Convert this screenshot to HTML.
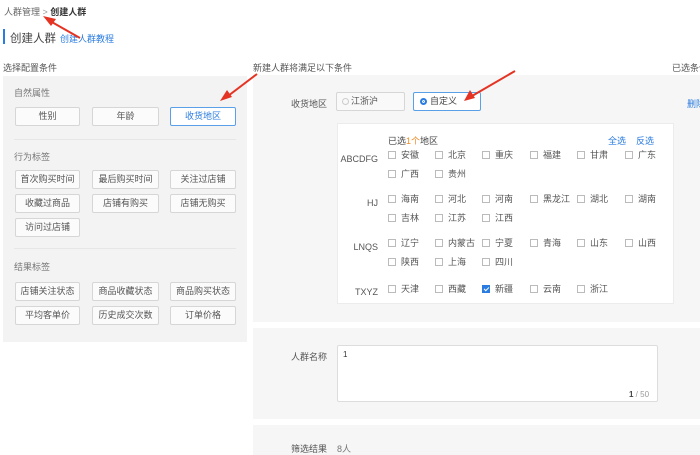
<!DOCTYPE html>
<html><head><meta charset="utf-8"><style>
*{box-sizing:border-box;margin:0;padding:0}
body{width:700px;height:455px;overflow:hidden;background:#fff;font-family:"Liberation Sans","Noto Sans CJK SC",sans-serif;font-size:9px;color:#333;position:relative}
.a{position:absolute;white-space:nowrap}
.btn{position:absolute;height:19px;border:1px solid #d6d6d6;background:#fbfbfb;text-align:center;line-height:17px;color:#555;font-size:9px;border-radius:2px}
.cb{position:absolute;font-size:9px;color:#555;line-height:10px}
.cb i{display:inline-block;width:8px;height:8px;border:1px solid #bbb;background:#fff;vertical-align:-1px;margin-right:5px;position:relative}
.cb i.on{background:#2b7ce0;border-color:#2b7ce0}
.cb i.on:after{content:"";position:absolute;left:2px;top:0px;width:2px;height:4px;border:solid #fff;border-width:0 1px 1px 0;transform:rotate(45deg)}
.lab{position:absolute;font-size:9px;color:#555;text-align:right;width:40px}
</style></head><body>
<div class="a" style="left:4px;top:5px;font-size:9px;color:#666">人群管理 <span style="color:#999">&gt;</span> <b style="color:#333">创建人群</b></div>
<div class="a" style="left:3px;top:29px;width:2px;height:15px;background:#2b7ce0"></div>
<div class="a" style="left:10px;top:30px;font-size:11.5px;color:#444">创建人群</div>
<div class="a" style="left:60px;top:32px;font-size:9px;color:#2b7ce0">创建人群教程</div>
<div class="a" style="left:3px;top:61px;color:#555">选择配置条件</div>
<div class="a" style="left:253px;top:61px;color:#555">新建人群将满足以下条件</div>
<div class="a" style="left:672px;top:61px;color:#555">已选条件</div>

<div class="a" style="left:3px;top:76px;width:244px;height:266px;background:#f3f3f3"></div>
<div class="a" style="left:14px;top:86px;color:#777">自然属性</div>
<div class="btn" style="left:15px;top:107px;width:65px">性别</div>
<div class="btn" style="left:92px;top:107px;width:67px">年龄</div>
<div class="btn" style="left:170px;top:107px;width:66px;border-color:#5aa0e8;color:#2b7ce0;background:#fff">收货地区</div>
<div class="a" style="left:14px;top:139px;width:222px;height:1px;background:#e6e6e6"></div>
<div class="a" style="left:14px;top:150px;color:#777">行为标签</div>
<div class="btn" style="left:15px;top:170px;width:65px">首次购买时间</div>
<div class="btn" style="left:92px;top:170px;width:67px">最后购买时间</div>
<div class="btn" style="left:170px;top:170px;width:66px">关注过店铺</div>
<div class="btn" style="left:15px;top:194px;width:65px">收藏过商品</div>
<div class="btn" style="left:92px;top:194px;width:67px">店铺有购买</div>
<div class="btn" style="left:170px;top:194px;width:66px">店铺无购买</div>
<div class="btn" style="left:15px;top:218px;width:65px">访问过店铺</div>
<div class="a" style="left:14px;top:248px;width:222px;height:1px;background:#e6e6e6"></div>
<div class="a" style="left:14px;top:260px;color:#777">结果标签</div>
<div class="btn" style="left:15px;top:282px;width:65px">店铺关注状态</div>
<div class="btn" style="left:92px;top:282px;width:67px">商品收藏状态</div>
<div class="btn" style="left:170px;top:282px;width:66px">商品购买状态</div>
<div class="btn" style="left:15px;top:306px;width:65px">平均客单价</div>
<div class="btn" style="left:92px;top:306px;width:67px">历史成交次数</div>
<div class="btn" style="left:170px;top:306px;width:66px">订单价格</div>

<div class="a" style="left:253px;top:75px;width:447px;height:247px;background:#f6f6f6"></div>
<div class="a" style="left:253px;top:328px;width:447px;height:91px;background:#f6f6f6"></div>
<div class="a" style="left:253px;top:425px;width:447px;height:30px;background:#f6f6f6"></div>

<div class="a" style="left:291px;top:97px;color:#555">收货地区</div>
<div class="btn" style="left:336px;top:92px;width:69px;height:19px;text-align:left;padding-left:5px;background:#f9f9f9"><span style="display:inline-block;width:7px;height:7px;border:1px solid #ccc;border-radius:50%;vertical-align:-1px;margin-right:2px"></span>江浙沪</div>
<div class="btn" style="left:413px;top:92px;width:68px;height:19px;text-align:left;padding-left:6px;background:#fff;border-color:#5aa0e8;color:#444"><span style="display:inline-block;width:7px;height:7px;border:2px solid #2b7ce0;border-radius:50%;vertical-align:-1px;margin-right:3px;box-shadow:inset 0 0 0 1px #fff;background:#2b7ce0"></span>自定义</div>
<div class="a" style="left:687px;top:97px;color:#2b7ce0">删除</div>

<div class="a" style="left:337px;top:123px;width:337px;height:181px;background:#fff;border:1px solid #ececec"></div>
<div class="a" style="left:388px;top:134px;color:#444">已选<span style="color:#f08a24">1个</span>地区</div>
<div class="a" style="left:608px;top:134px;color:#2b7ce0">全选</div>
<div class="a" style="left:636px;top:134px;color:#2b7ce0">反选</div>

<div class="lab" style="left:338px;top:154px">ABCDFG</div>
<div class="lab" style="left:338px;top:198px">HJ</div>
<div class="lab" style="left:338px;top:242px">LNQS</div>
<div class="lab" style="left:338px;top:287px">TXYZ</div>

<div class="cb" style="left:388px;top:150px"><i></i>安徽</div>
<div class="cb" style="left:435px;top:150px"><i></i>北京</div>
<div class="cb" style="left:482px;top:150px"><i></i>重庆</div>
<div class="cb" style="left:530px;top:150px"><i></i>福建</div>
<div class="cb" style="left:577px;top:150px"><i></i>甘肃</div>
<div class="cb" style="left:625px;top:150px"><i></i>广东</div>
<div class="cb" style="left:388px;top:169px"><i></i>广西</div>
<div class="cb" style="left:435px;top:169px"><i></i>贵州</div>

<div class="cb" style="left:388px;top:194px"><i></i>海南</div>
<div class="cb" style="left:435px;top:194px"><i></i>河北</div>
<div class="cb" style="left:482px;top:194px"><i></i>河南</div>
<div class="cb" style="left:530px;top:194px"><i></i>黑龙江</div>
<div class="cb" style="left:577px;top:194px"><i></i>湖北</div>
<div class="cb" style="left:625px;top:194px"><i></i>湖南</div>
<div class="cb" style="left:388px;top:213px"><i></i>吉林</div>
<div class="cb" style="left:435px;top:213px"><i></i>江苏</div>
<div class="cb" style="left:482px;top:213px"><i></i>江西</div>

<div class="cb" style="left:388px;top:238px"><i></i>辽宁</div>
<div class="cb" style="left:435px;top:238px"><i></i>内蒙古</div>
<div class="cb" style="left:482px;top:238px"><i></i>宁夏</div>
<div class="cb" style="left:530px;top:238px"><i></i>青海</div>
<div class="cb" style="left:577px;top:238px"><i></i>山东</div>
<div class="cb" style="left:625px;top:238px"><i></i>山西</div>
<div class="cb" style="left:388px;top:257px"><i></i>陕西</div>
<div class="cb" style="left:435px;top:257px"><i></i>上海</div>
<div class="cb" style="left:482px;top:257px"><i></i>四川</div>

<div class="cb" style="left:388px;top:284px"><i></i>天津</div>
<div class="cb" style="left:435px;top:284px"><i></i>西藏</div>
<div class="cb" style="left:482px;top:284px"><i class="on"></i>新疆</div>
<div class="cb" style="left:530px;top:284px"><i></i>云南</div>
<div class="cb" style="left:577px;top:284px"><i></i>浙江</div>

<div class="a" style="left:291px;top:350px;color:#555">人群名称</div>
<div class="a" style="left:337px;top:345px;width:321px;height:57px;background:#fff;border:1px solid #ddd;border-radius:2px"></div>
<div class="a" style="left:343px;top:350px;font-size:8px;color:#333">1</div>
<div class="a" style="left:629px;top:390px;font-size:8px;color:#999"><b style="color:#444">1</b> / 50</div>

<div class="a" style="left:291px;top:442px;color:#555">筛选结果</div>
<div class="a" style="left:337px;top:442px;color:#777">8人</div>

<svg class="a" style="left:0;top:0" width="700" height="455">
<g stroke="#e53323" stroke-width="2" fill="#e53323">
<line x1="80" y1="38" x2="50" y2="21"/><polygon points="43,16 56,19 51,26" stroke="none"/>
<line x1="257" y1="74" x2="228" y2="96"/><polygon points="220,101 227,90 232,97" stroke="none"/>
<line x1="515" y1="71" x2="472" y2="96"/><polygon points="464,101 470,90 475,98" stroke="none"/>
</g></svg>
</body></html>
